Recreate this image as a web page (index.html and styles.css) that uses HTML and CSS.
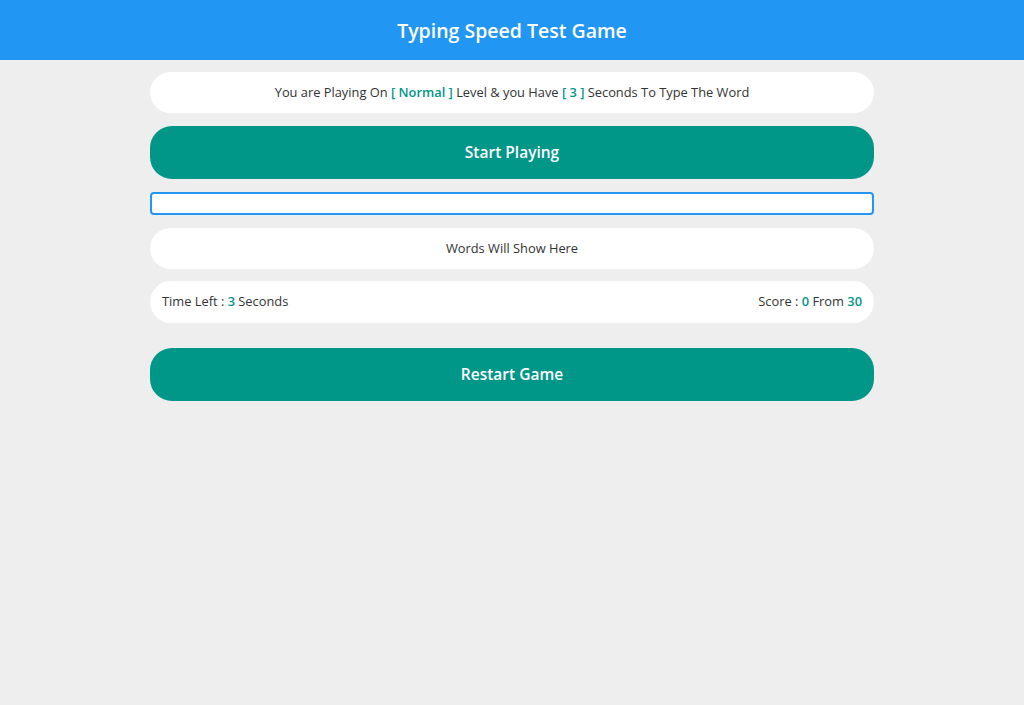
FILE: index.html
```html
<!DOCTYPE html>
<html lang="en">
<head>
    <meta charset="UTF-8">
    <meta name="viewport" content="width=device-width, initial-scale=1.0">
    <title>Typing Speed Test Game</title>
    <link rel="stylesheet" href="styles.css">
</head>
<body>
    <div class="name">Typing Speed Test Game</div>
    <div class="game">
        <div class="message">You are Playing On <span class="lvl">[ Normal ]</span> Level &amp; you Have <span class="seconds">[ 3 ]</span> Seconds To Type The Word</div>
        <div class="start">Start Playing</div>
        <input type="text" class="input">
        <div class="the-word">Words Will Show Here</div>
        <div class="control">
            <div class="time">Time Left : <span>3</span> Seconds</div>
            <div class="score">Score : <span class="got">0</span> From <span class="total">30</span></div>
        </div>
        <div class="restart">Restart Game</div>
    </div>
</body>
</html>
```
FILE: styles.css
```css
* {
    box-sizing: border-box;
}
body {
    font-family: "Open Sans", sans-serif;
    background-color: #eee;
    margin: 0;
    color: #333;
}
.name {
    background-color: #2196f3;
    color: white;
    font-size: 19.5px;
    font-weight: 600;
    text-align: center;
    height: 60px;
    line-height: 61px;
}
.game {
    width: 724px;
    margin: 12px auto;
    display: flex;
    flex-direction: column;
    gap: 13px;
}
.message,
.the-word {
    background-color: white;
    border-radius: 21px;
    text-align: center;
    font-size: 12.85px;
    line-height: 19px;
    padding: 11px;
}
.message span {
    color: #009688;
    font-weight: 600;
}
.start,
.restart {
    background-color: #009688;
    color: white;
    font-size: 15.5px;
    font-weight: 600;
    text-align: center;
    border-radius: 22px;
    line-height: 23px;
    padding: 15px;
    cursor: pointer;
}
.restart {
    margin-top: 12px;
}
.input {
    display: block;
    width: 100%;
    height: 23px;
    border: 2px solid #2196f3;
    border-radius: 4px;
    outline: none;
    padding: 0 8px;
    font-family: inherit;
}
.control {
    background-color: white;
    border-radius: 21px;
    display: flex;
    justify-content: space-between;
    font-size: 12.85px;
    line-height: 19px;
    padding: 11px 12px;
    height: 42px;
    margin-top: -1px;
}
.control span {
    color: #009688;
    font-weight: 600;
}
```
